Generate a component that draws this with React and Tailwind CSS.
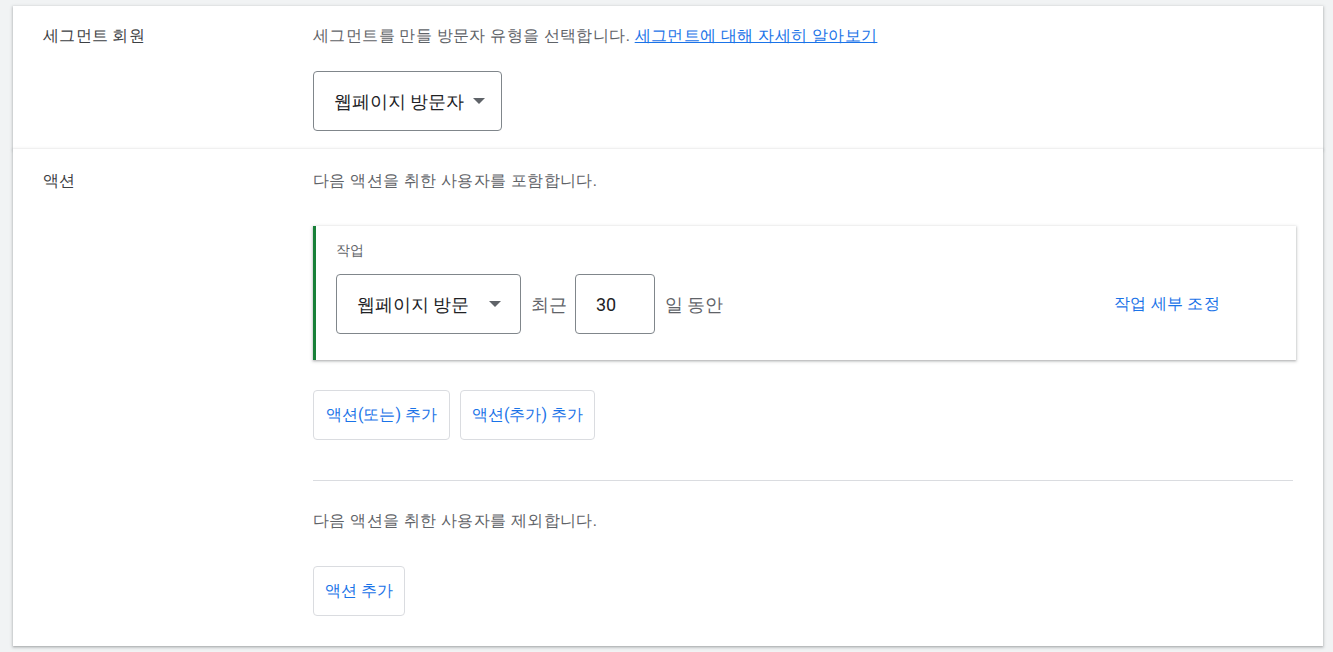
import React from "react";

const Caret = () => (
  <svg width="12" height="6" viewBox="0 0 12 6" className="shrink-0">
    <path d="M0 0 L12 0 L6 6 Z" fill="#5f6368" />
  </svg>
);

const OutlineButton = ({ children, small }) => (
  <button
    className={
      small
        ? "h-[50px] px-[11px] border border-[#dadce0] rounded-[4px] bg-white text-[16px] text-[#1a73e8] leading-6"
        : "h-[50px] px-[12px] border border-[#dadce0] rounded-[4px] bg-white text-[16px] text-[#1a73e8] leading-6"
    }
  >
    {children}
  </button>
);

const cardShadow = "shadow-[0_1px_2px_rgba(60,64,67,0.3),0_1px_3px_1px_rgba(60,64,67,0.15)]";

const App = () => {
  return (
    <div className="min-h-[652px] bg-[#f1f3f4] pt-[6px] pl-[13px] font-['Roboto',sans-serif]">
      <div className={`w-[1310px] bg-white ${cardShadow} flex pt-[18px] pb-[18px]`}>
        <div className="w-[300px] pl-[30px] text-[16px] leading-6 tracking-[0.3px] text-[#3c4043]">세그먼트 회원</div>
        <div className="flex flex-col">
          <p className="text-[16px] leading-6 tracking-[0.4px] text-[#5f6368]">
            세그먼트를 만들 방문자 유형을 선택합니다.{" "}
            <a href="#" className="text-[#1a73e8] underline">세그먼트에 대해 자세히 알아보기</a>
          </p>
          <div className="mt-[23px] w-[189px] h-[60px] border border-[#80868b] rounded-[4px] flex items-center gap-[9px] pl-[20px]">
            <span className="text-[18px] text-[#202124]">웹페이지 방문자</span>
            <Caret />
          </div>
        </div>
      </div>

      <div className={`w-[1310px] bg-white ${cardShadow} flex pt-[20px] pb-[30px]`}>
        <div className="w-[300px] pl-[30px] text-[16px] leading-6 tracking-[0.3px] text-[#3c4043]">액션</div>
        <div className="flex flex-col w-[983px]">
          <p className="text-[16px] leading-6 tracking-[0.4px] text-[#5f6368]">다음 액션을 취한 사용자를 포함합니다.</p>

          <div className={`mt-[33px] border-l-[3px] border-[#188038] bg-white ${cardShadow} pl-[20px] pt-[14px] pb-[26px]`}>
            <div className="text-[14px] leading-5 text-[#5f6368]">작업</div>
            <div className="mt-[14px] flex items-center">
              <div className="w-[185px] h-[60px] border border-[#80868b] rounded-[4px] flex items-center justify-between pl-[20px] pr-[19px]">
                <span className="text-[18px] text-[#202124]">웹페이지 방문</span>
                <Caret />
              </div>
              <span className="ml-[10px] text-[18px] text-[#5f6368]">최근</span>
              <div className="ml-[8px] w-[80px] h-[60px] border border-[#80868b] rounded-[4px] flex items-center pl-[20px] text-[18px] text-[#202124]">
                30
              </div>
              <span className="ml-[10px] text-[18px] text-[#5f6368]">일 동안</span>
              <button className="ml-auto mr-[76px] text-[16px] tracking-[0.3px] text-[#1a73e8]">작업 세부 조정</button>
            </div>
          </div>

          <div className="mt-[30px] flex gap-[10px]">
            <OutlineButton>액션(또는) 추가</OutlineButton>
            <OutlineButton small>액션(추가) 추가</OutlineButton>
          </div>

          <div className="mt-[40px] w-[980px] border-t border-[#dadce0]" />

          <p className="mt-[28px] text-[16px] leading-6 tracking-[0.4px] text-[#5f6368]">다음 액션을 취한 사용자를 제외합니다.</p>

          <div className="mt-[33px] flex">
            <OutlineButton small>액션 추가</OutlineButton>
          </div>
        </div>
      </div>
    </div>
  );
};

export default App;
